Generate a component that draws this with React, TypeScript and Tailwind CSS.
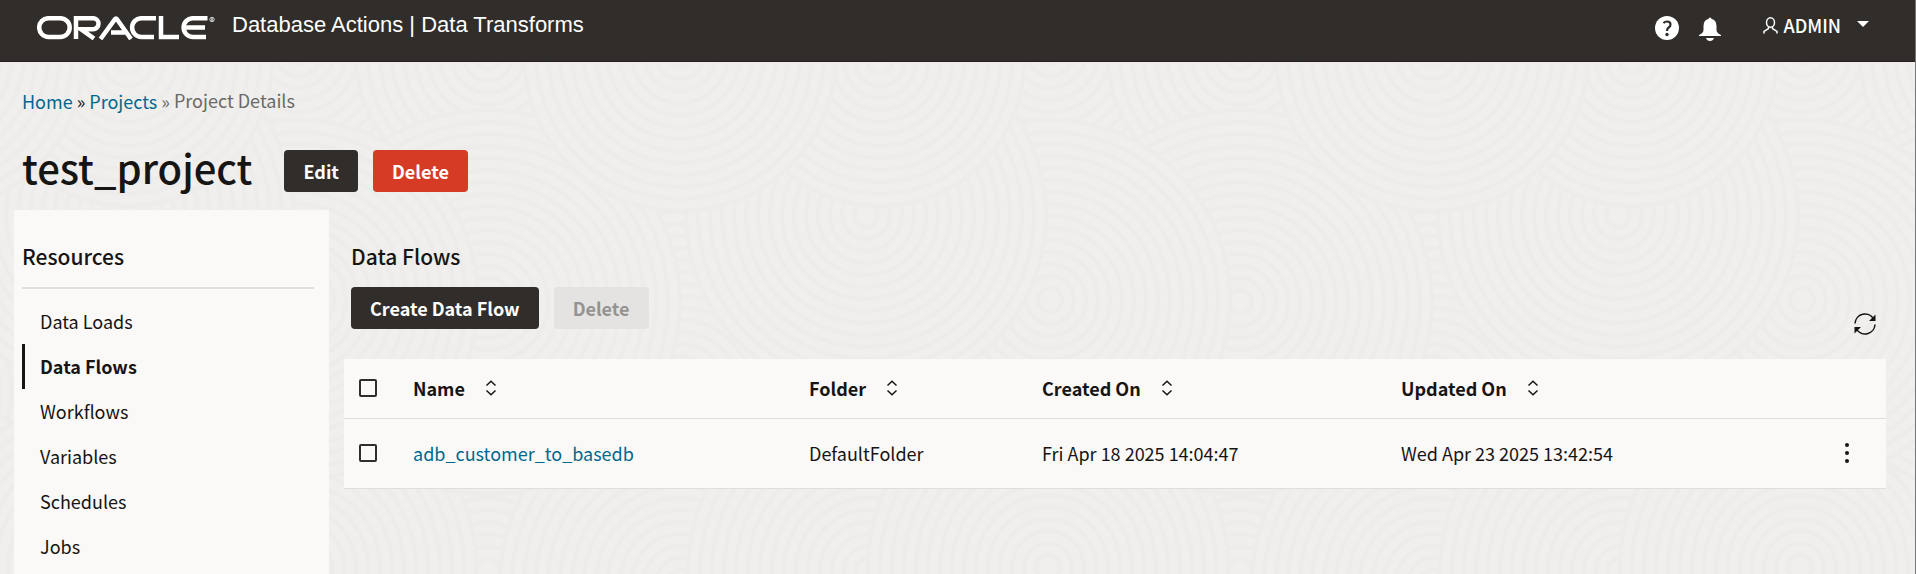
type Spot = { x: number; y: number; n: number };

const TILE = 752;

// whorls are painted in order, so later ones overlap the earlier ones
const WHORLS: Spot[] = [
  { x: 680, y: 330, n: 16 },
  { x: 488, y: 508, n: 15 },
  { x: 680, y: 520, n: 15 },
  { x: 116, y: 508, n: 15 },
  { x: 296, y: 505, n: 15 },
  { x: 298, y: -10, n: 13 },
  { x: 488, y: -5, n: 11 },
  { x: 488, y: 240, n: 16 },
  { x: 298, y: 238, n: 15 },
  { x: 114, y: 153, n: 15 },
  { x: 128, y: 0, n: 12 },
  { x: 680, y: -7, n: 13 },
];

function Whorl({ x, y, n }: Spot) {
  const radii = Array.from({ length: n }, (_, i) => (n - i) * 12);
  // the neighbours' copies fill in what the tile edge cuts off
  return [x - TILE, x, x + TILE].map((cx) => (
    <g key={cx}>
      {radii.map((r) => <circle key={r} cx={cx} cy={y} r={r} />)}
    </g>
  ));
}

function Backdrop() {
  return (
    <svg className="pointer-events-none absolute inset-0 h-full w-full" aria-hidden="true">
      <defs>
        <pattern id="whorls" y="62" width="752" height="640" patternUnits="userSpaceOnUse">
          <rect width="752" height="640" fill="#efeeec" />
          <g fill="#f0efed" stroke="#edecea" strokeWidth="4">
            {WHORLS.map((spot) => <Whorl key={`${spot.x}-${spot.y}`} {...spot} />)}
          </g>
        </pattern>
      </defs>
      <rect width="100%" height="100%" fill="url(#whorls)" />
    </svg>
  );
}

function OracleLogo() {
  return (
    <svg width="180" height="24" viewBox="0 0 180 24" fill="none" stroke="#fff" strokeWidth="4.500" role="img" aria-label="Oracle">
      <rect x="2.200" y="2.200" width="30.500" height="18.800" rx="9.400" />
      <path d="M39 23V2.200H56a5.500 5.500 0 0 1 0 11H44L57 22.500" />
      <path d="M63.500 23L78 3.200Q79 1.800 80 3.200L94 23M74 16.500H88" />
      <path d="M119 2.200H104.500a9.400 9.400 0 0 0 0 18.800H117" />
      <path d="M124 0V21H142" />
      <path d="M170.500 2.200H156a9.400 9.400 0 0 0 0 18.800H169M148 11.600H168" />
      <circle cx="175" cy="3.500" r="2.200" strokeWidth="0.8" />
      <path d="M174.500 5V2.500H175.500V5" strokeWidth="0.6" />
    </svg>
  );
}

function SortIcon() {
  return (
    <svg width="12" height="16" viewBox="0 0 12 16" fill="none" stroke="currentColor" strokeWidth="1.500">
      <path d="M1.500 5.500L6 1.200L10.500 5.500M1.500 10.500L6 14.800L10.500 10.500" />
    </svg>
  );
}

function RefreshIcon() {
  return (
    <svg width="22" height="22" viewBox="0 0 22 22" fill="none" stroke="currentColor" strokeWidth="1.500">
      <path d="M1 10.500A10 10 0 0 1 19.500 5.800M21 11.500A10 10 0 0 1 2.500 16.200" />
      <path d="M21.500 1.500V8H15ZM.5 20.500V14H7Z" fill="currentColor" stroke="none" />
    </svg>
  );
}

const RESOURCES = ['Data Loads', 'Data Flows', 'Workflows', 'Variables', 'Schedules', 'Jobs'];

const COLUMNS = [
  { label: 'Name', width: 'w-[396px]' },
  { label: 'Folder', width: 'w-[233px]' },
  { label: 'Created On', width: 'w-[359px]' },
  { label: 'Updated On', width: '' },
];

const checkbox = 'block size-[18px] appearance-none rounded-xs border-2 border-[#312d2a] checked:bg-[#312d2a]';
const button = 'h-[42px] rounded px-[19px] text-lg font-bold';

export default function App() {
  return (
    <div className="relative flex min-h-screen flex-col overflow-hidden border-r border-[#777] bg-[#efeeec] font-['Noto_Sans_CJK_SC',sans-serif] text-lg text-[#161513]">
      <Backdrop />
      <header className="relative flex h-[62px] items-start border-b border-[#241f1e] bg-[#312d2a] pr-[46px] pl-[37px] text-white">
        <div className="mt-4"><OracleLogo /></div>
        <span className="mt-[11px] ml-[15px] font-['Liberation_Sans',Arial,sans-serif] text-[22px] leading-7">
          Database Actions | Data Transforms
        </span>
        <div className="mt-[11px] ml-auto flex h-8 items-start">
          <button type="button" aria-label="Help" className="mt-[5px] mr-5">
            <svg width="24" height="24" viewBox="0 0 24 24">
              <circle cx="12" cy="12" r="12" fill="#fff" />
              <path d="M8.500 7.200Q9.800 5.500 12 5.500Q15.500 5.500 15.500 8.600Q15.500 10.300 13.700 11.500Q12 12.600 12 15" fill="none" stroke="#312d2a" strokeWidth="2.200" />
              <circle cx="12" cy="18.500" r="1.700" fill="#312d2a" />
            </svg>
          </button>
          <button type="button" aria-label="Notifications" className="mt-1.5 mr-[42px]">
            <svg width="22" height="24" viewBox="0 0 22 24" fill="#fff">
              <path d="M9.500 2a1.500 1.500 0 0 1 3 0Q17.500 3 17.500 9V13Q17.500 16 22 18V19H0V18Q4.500 16 4.500 13V9Q4.500 3 9.500 2ZM7 21H15Q14 24 11 24T7 21Z" />
            </svg>
          </button>
          <button type="button" className="flex h-7 items-center">
            <svg width="15" height="17" viewBox="0 0 15 17" fill="none" stroke="#fff" strokeWidth="1.500">
              <ellipse cx="7.500" cy="5.500" rx="4" ry="4.700" />
              <path d="M1 16.500V14.500L5.500 11.500V9.500M14 16.500V14.500L9.500 11.500V9.500" />
            </svg>
            <span className="ml-1.5 leading-7 font-medium">ADMIN</span>
            <svg className="mb-0.5 ml-4" width="12" height="6" viewBox="0 0 12 6" fill="#fff"><path d="M0 0H12L6 6Z" /></svg>
          </button>
        </div>
      </header>

      <nav aria-label="Breadcrumb" className="relative mt-[23px] flex h-8 items-center gap-1 pl-[22px] leading-8">
        <a href="#home" className="text-[#00688c]">Home</a>
        <span>»</span>
        <a href="#projects" className="text-[#00688c]">Projects</a>
        <span className="text-[#6b6967]">»</span>
        <span className="pb-[3px] text-[#6b6967]">Project Details</span>
      </nav>

      <div className="relative mt-[33px] flex h-[42px] items-start pl-[22px]">
        <h1 className="mr-8 text-[40px] leading-[34px] font-medium">test_project</h1>
        <button type="button" className={`${button} mr-[15px] bg-[#312d2a] text-white`}>Edit</button>
        <button type="button" className={`${button} bg-[#d63b25] text-white`}>Delete</button>
      </div>

      <div className="relative mt-[18px] flex flex-1 pr-[29px] pl-3.5">
        <aside className="w-[315px] shrink-0 bg-[#fbf9f8] pt-8 pr-[15px] pl-2">
          <h2 className="border-b-2 border-[#e0dedc] pb-[17px] text-[21px] leading-7 font-medium">Resources</h2>
          <ul className="pt-[10px]">
            {RESOURCES.map((name) => (
              <li key={name}>
                <a
                  href="#resources"
                  className={`block border-l-[3px] pl-[15px] leading-[45px] ${name === 'Data Flows' ? 'border-[#161513] font-bold' : 'border-transparent'}`}
                >
                  {name}
                </a>
              </li>
            ))}
          </ul>
        </aside>

        <main className="ml-[15px] min-w-0 flex-1 pt-8">
          <h2 className="pl-[7px] text-[21px] leading-7 font-medium">Data Flows</h2>
          <div className="mt-[17px] flex gap-[15px] pl-[7px]">
            <button type="button" className={`${button} bg-[#312d2a] text-white`}>Create Data Flow</button>
            <button type="button" disabled className={`${button} bg-[#e4e3e1] text-[#959391]`}>Delete</button>
            <button type="button" aria-label="Refresh" className="mt-[26px] mr-2.5 ml-auto h-[22px]"><RefreshIcon /></button>
          </div>
          <table className="mt-6 w-full table-fixed bg-[#fbf9f8] text-left">
            <thead>
              <tr className="h-[59px] border-b border-[#dfdedc]">
                <th className="w-[69px] pl-[15px]"><input type="checkbox" aria-label="Select all" className={checkbox} /></th>
                {COLUMNS.map(({ label, width }) => (
                  <th key={label} className={`${width} font-bold`}>
                    <button type="button" className="flex items-center gap-5">{label}<SortIcon /></button>
                  </th>
                ))}
                <th className="w-[78px]"></th>
              </tr>
            </thead>
            <tbody>
              <tr className="h-[70px] border-b border-[#dfdedc]">
                <td className="pl-[15px]"><input type="checkbox" aria-label="Select adb_customer_to_basedb" className={checkbox} /></td>
                <td><a href="#flow" className="text-[#00688c]">adb_customer_to_basedb</a></td>
                <td>DefaultFolder</td>
                <td>Fri Apr 18 2025 14:04:47</td>
                <td>Wed Apr 23 2025 13:42:54</td>
                <td>
                  <button type="button" aria-label="Actions" className="ml-[37px] block">
                    <svg width="4" height="20" viewBox="0 0 4 20" fill="currentColor">
                      <circle cx="2" cy="2" r="2" /><circle cx="2" cy="10" r="2" /><circle cx="2" cy="18" r="2" />
                    </svg>
                  </button>
                </td>
              </tr>
            </tbody>
          </table>
        </main>
      </div>
    </div>
  );
}
